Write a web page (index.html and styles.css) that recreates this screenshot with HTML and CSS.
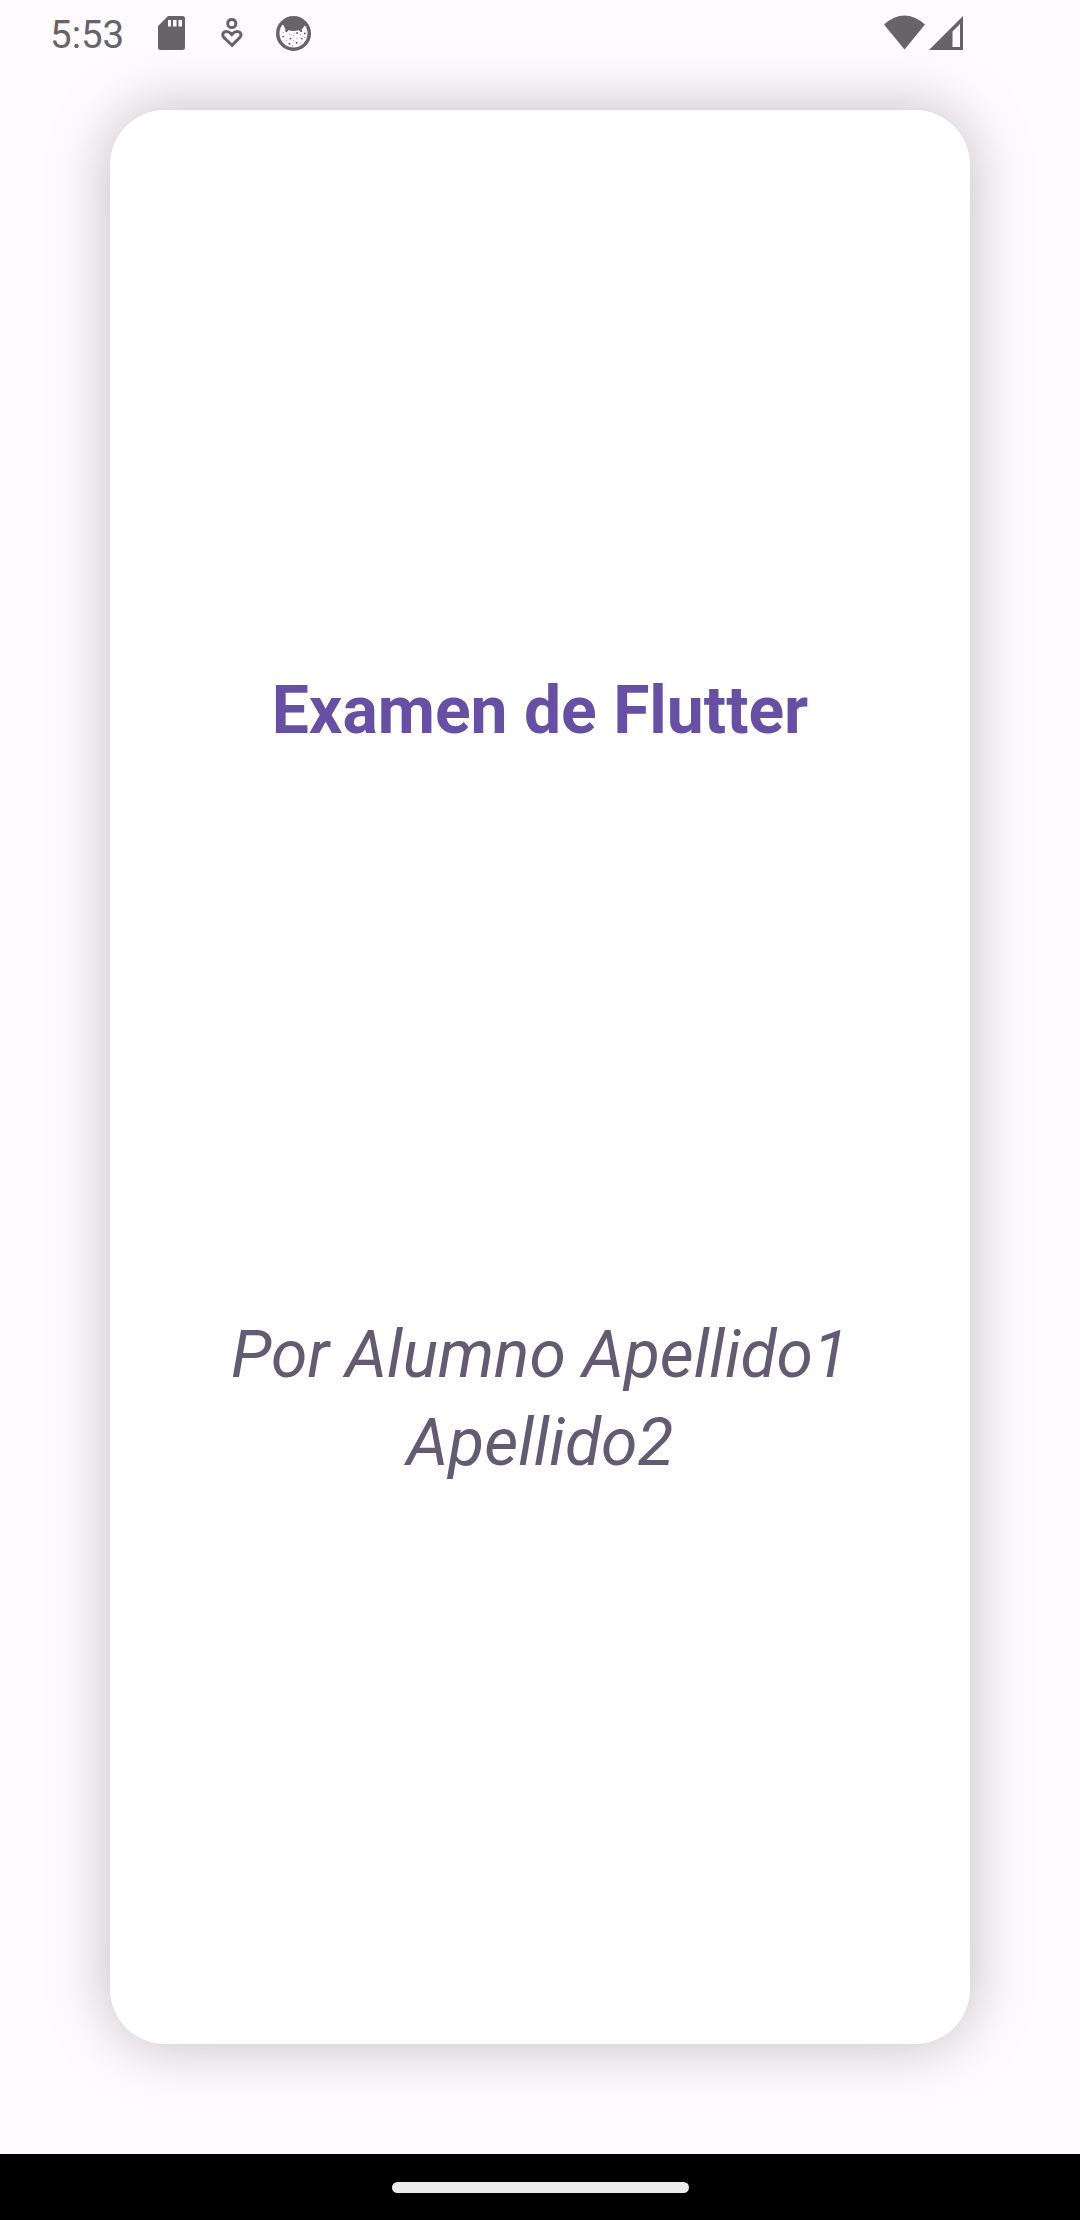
FILE: index.html
```html
<!DOCTYPE html>
<html lang="es">
<head>
<meta charset="utf-8">
<title>Examen de Flutter</title>
<link rel="stylesheet" href="styles.css">
</head>
<body>
<div class="screen">
  <header class="status-bar">
    <div class="status-left">
      <span class="clock">5:53</span>
      <svg class="icon-sd" viewBox="0 0 27 34"><path fill-rule="evenodd" d="M10 0H24.5Q27 0 27 2.500V31.500Q27 34 24.500 34H2.500Q0 34 0 31.500V10ZM10 4V10.500H13V4ZM15 4V10.500H18.500V4ZM20.500 4V10.500H24V4Z"/></svg>
      <svg class="icon-heart" viewBox="0 0 22 30"><circle cx="10.800" cy="5.500" r="4.100"/><path d="M11 27.300L2.700 19.200C-.8 14.700 6 10.700 10.800 16.500C15.600 10.700 22.500 14.700 19 19.200Z"/></svg>
      <svg class="icon-face" viewBox="0 0 34 34"><circle class="ring" cx="17" cy="17" r="15.300"/><path d="M5 8A15 15 0 0 1 29 8L27.500 10L25 13.200Q26.500 16 24 15.500L22 13.800Q17 15.200 12 13.800L10.500 15.800Q8.200 15.500 9.200 13L7 8.500Z"/><path class="dots" d="M20.500 16.500h.1M14 22h.1M7 20h.1M25 22h.1M20 26h.1M28 17h.1M13 27h.1"/><path class="specks" d="M7 16h.1M13 18h.1M17 19h.1M24 18h.1M10 24h.1M20 22h.1M16 29h.1M17 24h.1M24 27h.1M28 21h.1"/></svg>
    </div>
    <div class="status-right">
      <svg class="icon-wifi" viewBox="0 0 41 35"><path d="M0 9.500Q20.500-8.500 41 9.500L20.500 34.500Z"/></svg>
      <svg class="icon-signal" viewBox="0 0 34 34"><path fill-rule="evenodd" d="M0 34L34 0V34ZM23.500 15.500V31H31V8Z"/></svg>
    </div>
  </header>
  <main class="card">
    <h1 class="title">Examen de Flutter</h1>
    <p class="author">Por Alumno Apellido1 Apellido2</p>
  </main>
  <footer class="nav-bar"><div class="nav-handle"></div></footer>
</div>
</body>
</html>
```
FILE: styles.css
```css
* { box-sizing: border-box; }
body { margin: 0; font-family: Roboto, sans-serif; }
.screen {
  width: 1080px;
  height: 2220px;
  display: flex;
  flex-direction: column;
  background: #fffbff;
  overflow: hidden;
}
.status-bar {
  height: 66px;
  flex: none;
  display: flex;
  justify-content: space-between;
  padding: 0 117px 0 50px;
  color: #666466;
  z-index: 1;
}
.status-bar svg { fill: currentColor; display: block; }
.status-left, .status-right { display: flex; align-items: flex-start; }
.clock { width: 108px; font-size: 38.500px; line-height: 69px; }
.icon-sd { width: 27px; height: 34px; margin-top: 16px; }
.status-bar .icon-heart {
  width: 22px;
  height: 30px;
  margin: 18px 0 0 36px;
  fill: none;
  stroke: currentColor;
  stroke-width: 3;
}
.icon-face { width: 35px; height: 35px; margin: 16px 0 0 33px; }
.icon-face .ring, .icon-face .dots, .icon-face .specks { fill: none; stroke: currentColor; }
.icon-face .ring { stroke-width: 3.400; }
.icon-face .dots { stroke-width: 1.800; stroke-linecap: round; }
.icon-face .specks { stroke-width: 1; stroke-linecap: round; opacity: .7; }
.icon-wifi { width: 41px; height: 35px; margin-top: 15px; }
.icon-signal { width: 34px; height: 34px; margin: 16px 0 0 4px; }
.card {
  flex: 1;
  margin: 44px 110px 110px;
  display: flex;
  flex-direction: column;
  align-items: center;
  justify-content: space-evenly;
  background: #fff;
  border-radius: 55px;
  box-shadow: 0 0 65px rgba(0, 0, 0, .26);
  text-align: center;
  font-size: 66px;
  line-height: 88px;
}
.title { margin: 0; font-size: inherit; font-weight: 700; color: #6750a4; }
.author { margin: 0; font-style: italic; color: #625b71; }
.nav-bar {
  height: 66px;
  flex: none;
  display: flex;
  align-items: center;
  justify-content: center;
  background: #000;
}
.nav-handle { width: 297px; height: 11px; border-radius: 6px; background: #ebebeb; }
```
